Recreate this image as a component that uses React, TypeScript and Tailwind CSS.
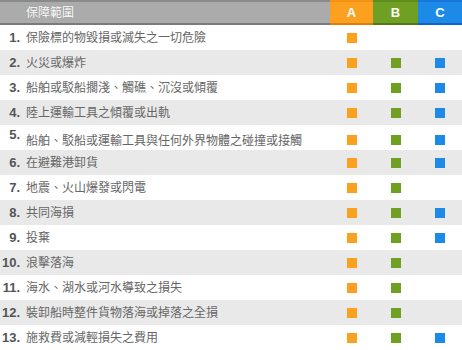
import React from 'react';

type Row = {
  no: number;
  label: string;
  a: boolean;
  b: boolean;
  c: boolean;
};

const rows: Row[] = [
  { no: 1, label: '保險標的物毀損或滅失之一切危險', a: true, b: false, c: false },
  { no: 2, label: '火災或爆炸', a: true, b: true, c: true },
  { no: 3, label: '船舶或駁船擱淺、觸礁、沉沒或傾覆', a: true, b: true, c: true },
  { no: 4, label: '陸上運輸工具之傾覆或出軌', a: true, b: true, c: true },
  { no: 5, label: '船舶、駁船或運輸工具與任何外界物體之碰撞或接觸', a: true, b: true, c: true },
  { no: 6, label: '在避難港卸貨', a: true, b: true, c: true },
  { no: 7, label: '地震、火山爆發或閃電', a: true, b: true, c: false },
  { no: 8, label: '共同海損', a: true, b: true, c: true },
  { no: 9, label: '投棄', a: true, b: true, c: true },
  { no: 10, label: '浪擊落海', a: true, b: true, c: false },
  { no: 11, label: '海水、湖水或河水導致之損失', a: true, b: true, c: false },
  { no: 12, label: '裝卸船時整件貨物落海或掉落之全損', a: true, b: true, c: false },
  { no: 13, label: '施救費或減輕損失之費用', a: true, b: true, c: true },
];

const font = { fontFamily: '"Liberation Sans", "Noto Sans CJK TC", sans-serif' };

const Mark: React.FC<{ on: boolean; color: string }> = ({ on, color }) => (
  <div className="flex items-center justify-center">
    {on && <span className={`block w-[10px] h-[10px] ${color}`} />}
  </div>
);

const App: React.FC = () => {
  return (
    <div className="w-[462px] h-[350px] bg-white overflow-hidden" style={font}>
      {/* header */}
      <div className="grid grid-cols-[330px_43px_45px_44px] h-[25px] text-white">
        <div className="flex items-center pl-[26px] text-[12px] border-t-2 border-b-2 border-t-[#8a8a8a] border-b-[#7a7a7a] bg-[#ababab] [text-shadow:0_0_1px_#888]">
          保障範圍
        </div>
        <div className="flex items-center justify-center font-bold text-[13px] border-t-2 border-b-2 border-t-[#f39214] border-b-[#de7d0a] bg-[#fba11f]">
          A
        </div>
        <div className="flex items-center justify-center font-bold text-[13px] border-t-2 border-b-2 border-t-[#5e8d1c] border-b-[#4f7a14] bg-[#6fa023]">
          B
        </div>
        <div className="flex items-center justify-center font-bold text-[13px] border-t-2 border-b-2 border-t-[#1976dc] border-b-[#0f62c8] bg-[#1e8ae8]">
          C
        </div>
      </div>

      {/* rows */}
      {rows.map((r) => (
        <div
          key={r.no}
          className={`grid grid-cols-[330px_43px_45px_44px] h-[25px] ${r.no % 2 === 0 ? 'bg-[#e9e9e9]' : 'bg-white'}`}
        >
          <div className="flex items-center">
            <span
              className={`w-[20px] text-right font-bold text-[13px] text-[#555555] ${r.no === 5 ? 'mb-[11px]' : ''}`}
            >
              {r.no}.
            </span>
            <span className={`ml-[6px] text-[12px] text-[#666666] whitespace-nowrap ${r.no === 5 ? 'mt-[2px]' : ''}`}>
              {r.label}
            </span>
          </div>
          <Mark on={r.a} color="bg-[#fba11f]" />
          <Mark on={r.b} color="bg-[#6fa023]" />
          <Mark on={r.c} color="bg-[#1e8ae8]" />
        </div>
      ))}
    </div>
  );
};

export default App;
